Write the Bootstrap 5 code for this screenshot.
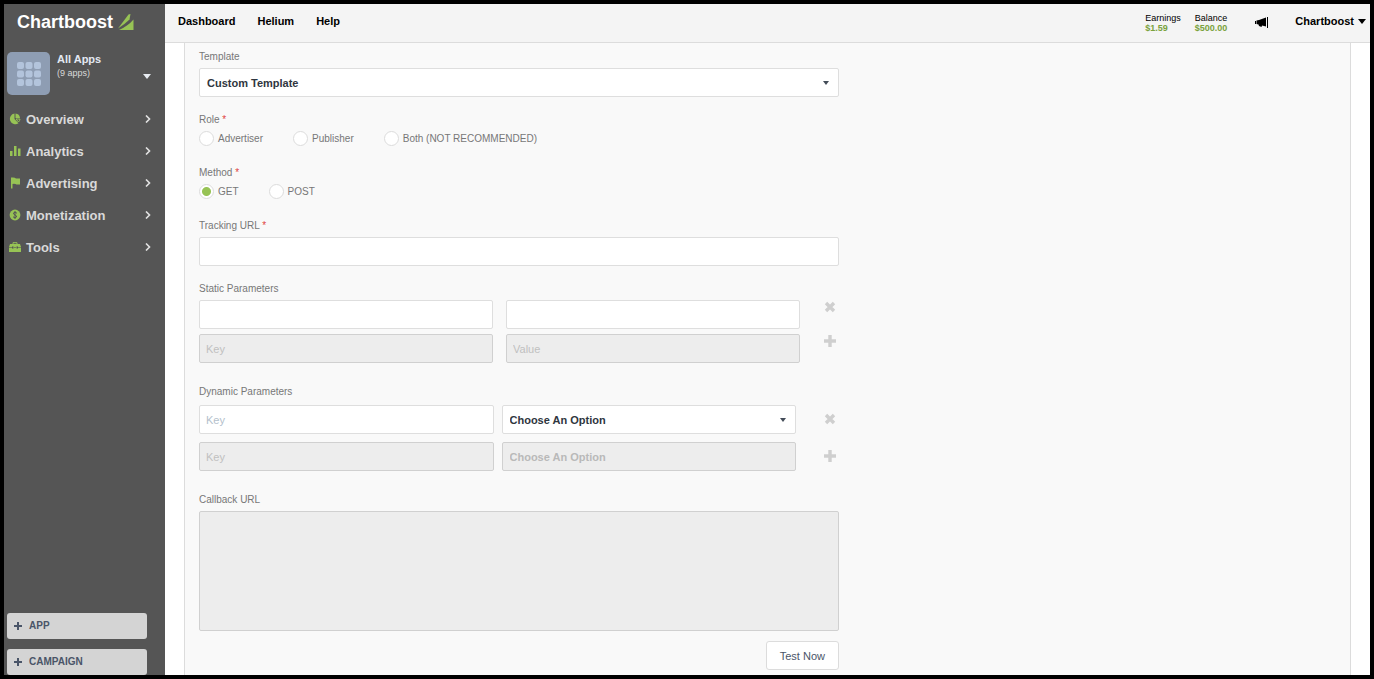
<!DOCTYPE html>
<html lang="en">
<head>
<meta charset="utf-8">
<meta name="viewport" content="width=device-width, initial-scale=1">
<title>Chartboost</title>
<link href="https://cdn.jsdelivr.net/npm/bootstrap@5.3.0/dist/css/bootstrap.min.css" rel="stylesheet">
<style>
  body { font-family: "Liberation Sans", Arial, sans-serif; font-size: 10px; line-height: 14px; color: #777; background: #fff; border: 4px solid #000; }
  a { text-decoration: none; color: inherit; }

  /* sidebar */
  .side { width: 161px; background: #555; color: #d9d9d9; }
  .brand { font-size: 18px; line-height: 24px; color: #fff; padding: 6px 13px 0; gap: 5px; }
  .app-switch { margin-top: 18px; padding: 0 14px 0 3px; gap: 7px; }
  .app-switch .caret { margin-top: 22px; }
  .app-tile { width: 43px; height: 43px; border-radius: 5px; background: #8e9db3; }
  .app-name { font-size: 11px; color: #e3e8f2; }
  .app-count { font-size: 9px; }
  .side-nav { margin-top: 9px; }
  .side-nav .nav-link { font-size: 13px; line-height: 16px; font-weight: bold; color: #d9d9d9; padding: 8px 14px 8px 5px; gap: 5px; }
  .side-nav svg { margin-bottom: 3px; flex-shrink: 0; }
  .side-btn { height: 26px; margin: 0 18px 10px 3px; padding: 0 7px; gap: 7px; border: 0; border-radius: 3px; background: #d4d4d4; color: #4a5568; font-size: 10px; line-height: 14px; font-weight: bold; }
  .side-btn:last-child { margin-bottom: 0; }
  .side-btn:hover { background: #dedede; color: #4a5568; }

  /* top bar */
  .top { height: 39px; background: #f4f4f4; border-bottom: 1px solid #dcdcdc; color: #000; padding: 0 4px 4px 13px; font-size: 11px; }
  .top-links { gap: 22px; }
  .stat { font-size: 9px; line-height: 10px; }
  .stat b { color: #7aa23c; display: block; }
  .stats { gap: 14px; }
  .mega { margin: 3px 26px 0 28px; }
  .account { gap: 4px; }

  /* form panel */
  .page { padding: 0 19px; }
  .panel { background: #f9f9f9; border: 1px solid #dcdcdc; border-width: 0 1px; padding: 7px 14px 5px; }
  .settings { max-width: 640px; }
  .settings label, .settings legend { display: block; font-size: 10px; line-height: 14px; margin: 0 0 4px; color: #777; float: none; }
  .settings .req { color: #e0443e; }
  .field { margin-bottom: 16px; }
  .choice { margin-bottom: 20px; }
  .params { margin-bottom: 22px; }
  .tracking { margin-bottom: 15px; }
  .form-control, .form-select { height: 29px; padding: 0 7px; font-size: 11px; line-height: 16px; border: 1px solid #dedede; border-radius: 2px; background-color: #fff; color: #2f3640; }
  .form-control { padding: 0 6px; }
  .form-select { font-weight: bold; background-image: url("data:image/svg+xml,%3Csvg xmlns='http://www.w3.org/2000/svg' viewBox='0 0 6 4'%3E%3Cpath d='M0 0h6L3 4z' fill='%23434c58'/%3E%3C/svg%3E"); background-size: 6px 4px; background-position: right 9px center; }
  .form-control::placeholder { color: #b4bfcc; }
  .form-control:disabled, .form-select:disabled { background-color: #ededed; border-color: #d0d0d0; color: #b9b9b9; opacity: 1; }
  .form-select:disabled { background-image: none; }
  .form-control:disabled::placeholder { color: #c0c0c0; }
  textarea.form-control { height: 120px; resize: none; }
  .opts { gap: 30px; }
  .settings .opt { display: flex; align-items: center; gap: 4px; height: 15px; margin: 0; }
  .opt .form-check-input { width: 15px; height: 15px; margin: 0; border: 1px solid #dcdcdc; background-color: #fff; }
  .opt .form-check-input:checked { border-color: #dcdcdc; background-color: #fff; background-image: radial-gradient(circle, #97c355 4px, transparent 5px); }
  .pair, .pair-option { display: grid; padding-right: 1px; }
  .pair { grid-template-columns: 1fr 1fr 25px; column-gap: 13px; margin-bottom: 5px; }
  .pair-option { grid-template-columns: 1fr 1fr 34px; column-gap: 8px; margin-top: 8px; }
  legend + .pair-option { margin-top: 2px; }
  .icon-btn { width: 16px; height: 14px; padding: 0; border: 0; background: none; line-height: 0; justify-self: end; }
  .pair-option .icon-btn { margin-top: 7px; }
  .run { height: 29px; padding: 0 13px; border: 1px solid #dcdcdc; border-radius: 3px; background: #fff; color: #4a5568; font-size: 11px; line-height: 16px; margin-top: 10px; }
</style>
</head>
<body class="d-flex min-vh-100">

<aside class="side d-flex flex-column flex-shrink-0">
  <a href="#" class="brand d-flex align-items-center fw-bold">Chartboost
    <svg width="16" height="16" viewBox="0 0 16 16" fill="#97c355"><path d="M0 14.500 10.500 0.500 12.500 0 11.500 5.500Q7 10 0 14.500z"/><path d="M1 16Q10 12 15.500 5.500V16z"/></svg>
  </a>

  <a href="#" class="app-switch d-flex">
    <span class="app-tile d-flex align-items-center justify-content-center">
      <svg width="24" height="24" viewBox="0 0 24 24" fill="#b3c4dc"><g id="r"><rect width="7" height="7" rx="2"/><rect x="8.500" width="7" height="7" rx="2"/><rect x="17" width="7" height="7" rx="2"/></g><use href="#r" y="8.500"/><use href="#r" y="17"/></svg>
    </span>
    <span class="flex-grow-1"><b class="app-name d-block">All Apps</b><span class="app-count d-block">(9 apps)</span></span>
    <svg class="caret" width="8" height="5" viewBox="0 0 8 5" fill="#e8ecf2"><path d="M0 0h8L4 5z"/></svg>
  </a>

  <nav class="side-nav nav flex-column">
    <a href="#" class="nav-link d-flex align-items-center">
      <svg width="12" height="12" viewBox="0 0 12 12"><path d="M5.500 0.500V6l4 4.200A5.400 5.400 0 1 1 5.500 0.500z" fill="#97c355"/><path d="M6.500 0.500A5 5 0 0 1 11 5L6.500 5z" fill="#97c355"/><path d="M7 6h4a5 5 0 0 1-1.500 3z" fill="none" stroke="#97c355"/></svg>
      <span class="flex-grow-1">Overview</span>
      <svg width="6" height="8" viewBox="0 0 6 8"><path d="M1 0.500 4.500 4 1 7.500" fill="none" stroke="#e2e2e2" stroke-width="1.600"/></svg>
    </a>
    <a href="#" class="nav-link d-flex align-items-center">
      <svg width="12" height="12" viewBox="0 0 12 12" fill="#97c355"><path d="M1 6h2.500v5H1zM5 1h2.500v10H5zM9 3.500h2.500V11H9z"/></svg>
      <span class="flex-grow-1">Analytics</span>
      <svg width="6" height="8" viewBox="0 0 6 8"><path d="M1 0.500 4.500 4 1 7.500" fill="none" stroke="#e2e2e2" stroke-width="1.600"/></svg>
    </a>
    <a href="#" class="nav-link d-flex align-items-center">
      <svg width="12" height="12" viewBox="0 0 12 12" fill="#97c355"><path d="M2 0.500h2Q6 0.500 7 1.500h4v6H7.500Q6 6.500 3.500 7v4.500H2z"/></svg>
      <span class="flex-grow-1">Advertising</span>
      <svg width="6" height="8" viewBox="0 0 6 8"><path d="M1 0.500 4.500 4 1 7.500" fill="none" stroke="#e2e2e2" stroke-width="1.600"/></svg>
    </a>
    <a href="#" class="nav-link d-flex align-items-center">
      <svg width="12" height="12" viewBox="0 0 12 12"><circle cx="6" cy="6" r="5.400" fill="#97c355"/><path d="M8 4.200Q6 2.800 4.700 3.800 4 5.300 6 6T7.500 8Q6 9.300 4 7.900M6 2v8" fill="none" stroke="#555"/></svg>
      <span class="flex-grow-1">Monetization</span>
      <svg width="6" height="8" viewBox="0 0 6 8"><path d="M1 0.500 4.500 4 1 7.500" fill="none" stroke="#e2e2e2" stroke-width="1.600"/></svg>
    </a>
    <a href="#" class="nav-link d-flex align-items-center">
      <svg width="12" height="12" viewBox="0 0 12 12"><path d="M4 3V1.700h4V3" fill="none" stroke="#97c355"/><path d="M1 3h10l1 3v5H0V6z" fill="#97c355"/><path d="M0 6.500h3M5 6.500h2M9 6.500h3" stroke="#555" stroke-width="0.600"/><path d="M3 5.500h1.500v2H3zM7.500 5.500H9v2H7.500z" fill="#555"/></svg>
      <span class="flex-grow-1">Tools</span>
      <svg width="6" height="8" viewBox="0 0 6 8"><path d="M1 0.500 4.500 4 1 7.500" fill="none" stroke="#e2e2e2" stroke-width="1.600"/></svg>
    </a>
  </nav>

  <div class="mt-auto d-flex flex-column">
    <button type="button" class="side-btn d-flex align-items-center"><svg width="8" height="8" viewBox="0 0 8 8"><path d="M4 0v8M0 4h8" stroke="#4a5568" stroke-width="2"/></svg><span>APP</span></button>
    <button type="button" class="side-btn d-flex align-items-center"><svg width="8" height="8" viewBox="0 0 8 8"><path d="M4 0v8M0 4h8" stroke="#4a5568" stroke-width="2"/></svg><span>CAMPAIGN</span></button>
  </div>
</aside>

<div class="flex-grow-1 d-flex flex-column">
  <header class="top d-flex align-items-center justify-content-between">
    <nav class="top-links d-flex fw-bold"><a href="#">Dashboard</a><a href="#">Helium</a><a href="#">Help</a></nav>
    <div class="d-flex align-items-center">
      <div class="stats d-flex pt-1">
        <div class="stat">Earnings<b>$1.59</b></div>
        <div class="stat">Balance<b>$500.00</b></div>
      </div>
      <a href="#" class="mega d-flex" aria-label="Announcements">
        <svg width="14" height="11" viewBox="0 0 14 11"><path d="M0 4h1v3H0zM1.500 3.500 4 3 11 0.500v9L7 8.500 6.500 10 4 9 3.500 7.500 1.500 7zM12 0h1v11h-1z"/></svg>
      </a>
      <a href="#" class="account d-flex align-items-center fw-bold">Chartboost
        <svg width="8" height="5" viewBox="0 0 8 5"><path d="M0 0h8L4 5z"/></svg>
      </a>
    </div>
  </header>

  <main class="page flex-grow-1 d-flex">
    <section class="panel flex-grow-1">
      <form class="settings">
        <div class="field">
          <label for="template">Template</label>
          <select id="template" class="form-select"><option>Custom Template</option></select>
        </div>

        <fieldset class="choice">
          <legend>Role <span class="req">*</span></legend>
          <div class="opts d-flex">
            <label class="opt"><input class="form-check-input" type="radio" name="role">Advertiser</label>
            <label class="opt"><input class="form-check-input" type="radio" name="role">Publisher</label>
            <label class="opt"><input class="form-check-input" type="radio" name="role">Both (NOT RECOMMENDED)</label>
          </div>
        </fieldset>

        <fieldset class="choice">
          <legend>Method <span class="req">*</span></legend>
          <div class="opts d-flex">
            <label class="opt"><input class="form-check-input" type="radio" name="method" checked>GET</label>
            <label class="opt"><input class="form-check-input" type="radio" name="method">POST</label>
          </div>
        </fieldset>

        <div class="field">
          <label for="tracking">Tracking URL <span class="req">*</span></label>
          <input id="tracking" type="text" class="form-control">
        </div>

        <fieldset class="params">
          <legend>Static Parameters</legend>
          <div class="pair">
            <input type="text" class="form-control" aria-label="Key">
            <input type="text" class="form-control" aria-label="Value">
            <button type="button" class="icon-btn" aria-label="Remove"><svg width="12" height="12" viewBox="0 0 12 12"><path d="M2 2l8 8M10 2l-8 8" stroke="#cfcfcf" stroke-width="3.400"/></svg></button>
          </div>
          <div class="pair mb-0">
            <input type="text" class="form-control" placeholder="Key" aria-label="Key" disabled>
            <input type="text" class="form-control" placeholder="Value" aria-label="Value" disabled>
            <button type="button" class="icon-btn" aria-label="Add"><svg width="12" height="12" viewBox="0 0 12 12"><path d="M6 0v12M0 6h12" stroke="#cfcfcf" stroke-width="3.400"/></svg></button>
          </div>
        </fieldset>

        <fieldset class="params">
          <legend>Dynamic Parameters</legend>
          <div class="pair-option">
            <input type="text" class="form-control" placeholder="Key" aria-label="Key">
            <select class="form-select" aria-label="Value"><option>Choose An Option</option></select>
            <button type="button" class="icon-btn" aria-label="Remove"><svg width="12" height="12" viewBox="0 0 12 12"><path d="M2 2l8 8M10 2l-8 8" stroke="#cfcfcf" stroke-width="3.400"/></svg></button>
          </div>
          <div class="pair-option">
            <input type="text" class="form-control" placeholder="Key" aria-label="Key" disabled>
            <select class="form-select" aria-label="Value" disabled><option>Choose An Option</option></select>
            <button type="button" class="icon-btn" aria-label="Add"><svg width="12" height="12" viewBox="0 0 12 12"><path d="M6 0v12M0 6h12" stroke="#cfcfcf" stroke-width="3.400"/></svg></button>
          </div>
        </fieldset>

        <label for="callback">Callback URL</label>
        <textarea id="callback" class="form-control" disabled></textarea>
        <div class="d-flex justify-content-end"><button type="button" class="run">Test Now</button></div>
      </form>
    </section>
  </main>
</div>

<script src="https://cdn.jsdelivr.net/npm/bootstrap@5.3.0/dist/js/bootstrap.bundle.min.js"></script>
</body>
</html>
